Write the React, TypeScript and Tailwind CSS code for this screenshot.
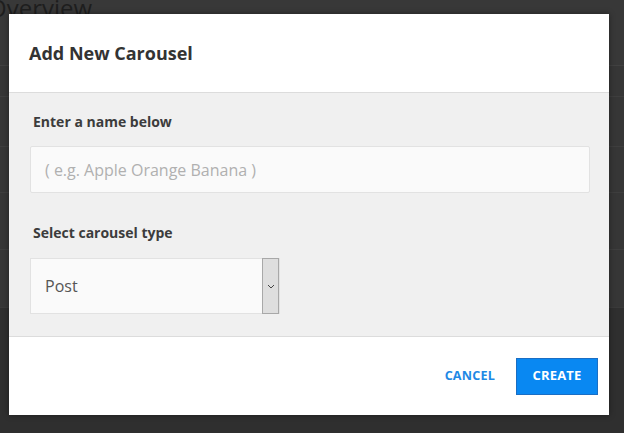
import React from 'react';

const font = { fontFamily: '"Open Sans", "Liberation Sans", sans-serif' };

const App: React.FC = () => {
    return (
        <div className="relative w-[624px] h-[433px] overflow-hidden bg-[#2f2f2f]" style={font}>
            {/* Backdrop page (dimmed) */}
            <div className="flex flex-col">
                <div className="h-[66px] bg-[#383838] border-b border-[#414141]">
                    <h1 className="-mt-[8px] -ml-[12px] text-[24px] leading-[32px] text-[#1e1e1e]">Overview</h1>
                </div>
                <div className="h-[31px] bg-[#363636] border-b border-[#3e3e3e]"></div>
                <div className="h-[50px] bg-[#363636] border-b border-[#3e3e3e]"></div>
                <div className="h-[46px] bg-[#363636] border-b border-[#3e3e3e]"></div>
                <div className="h-[57px] bg-[#363636] border-b border-[#3e3e3e]"></div>
                <div className="h-[58px] bg-[#363636] border-b border-[#3a3a3a]"></div>
            </div>

            {/* Modal */}
            <div className="absolute left-[9px] top-[14px] w-[600px] flex flex-col bg-white shadow-[0_0_6px_rgba(0,0,0,0.4)]">
                <div className="h-[79px] flex items-center px-[20px] border-b border-[#dcdcdc]">
                    <h2 className="text-[18px] font-bold text-[#333]">Add New Carousel</h2>
                </div>

                <div className="bg-[#f0f0f0] pl-[21px] pr-[19px] pt-[19px] pb-[22px] border-b border-[#dcdcdc]">
                    <label className="block ml-[3px] text-[14px] leading-[20px] font-bold text-[#3c3c3c]">Enter a name below</label>
                    <input
                        type="text"
                        placeholder="( e.g. Apple Orange Banana )"
                        className="mt-[14px] w-full h-[47px] px-[14px] bg-[#fafafa] border border-[#e2e2e2] rounded-[2px] text-[16px] text-[#555] placeholder:text-[#b0b0b0] outline-none"
                    />

                    <label className="block mt-[30px] ml-[3px] text-[14px] leading-[20px] font-bold text-[#3c3c3c]">Select carousel type</label>
                    <div className="mt-[15px] w-[250px] h-[56px] flex bg-[#fafafa] border border-[#e2e2e2]">
                        <div className="flex-1 flex items-center px-[14px] text-[16px] text-[#555]">Post</div>
                        <div className="w-[17px] -my-px flex items-center justify-center bg-[#dedede] border border-[#a8a8a8]">
                            <svg width="8" height="5" viewBox="0 0 8 5" fill="none">
                                <path d="M1 1l3 3 3-3" stroke="#444" strokeWidth="1" />
                            </svg>
                        </div>
                    </div>
                </div>

                <div className="h-[78px] flex items-center justify-end gap-[21px] pr-[11px]">
                    <button className="text-[12.6px] font-bold text-[#1e88e5] tracking-[0.2px]">CANCEL</button>
                    <button className="w-[82px] h-[37px] bg-[#0988f2] border border-[#1a6ec4] text-white text-[13px] font-bold tracking-[0.2px]">CREATE</button>
                </div>
            </div>
        </div>
    );
};

export default App;
